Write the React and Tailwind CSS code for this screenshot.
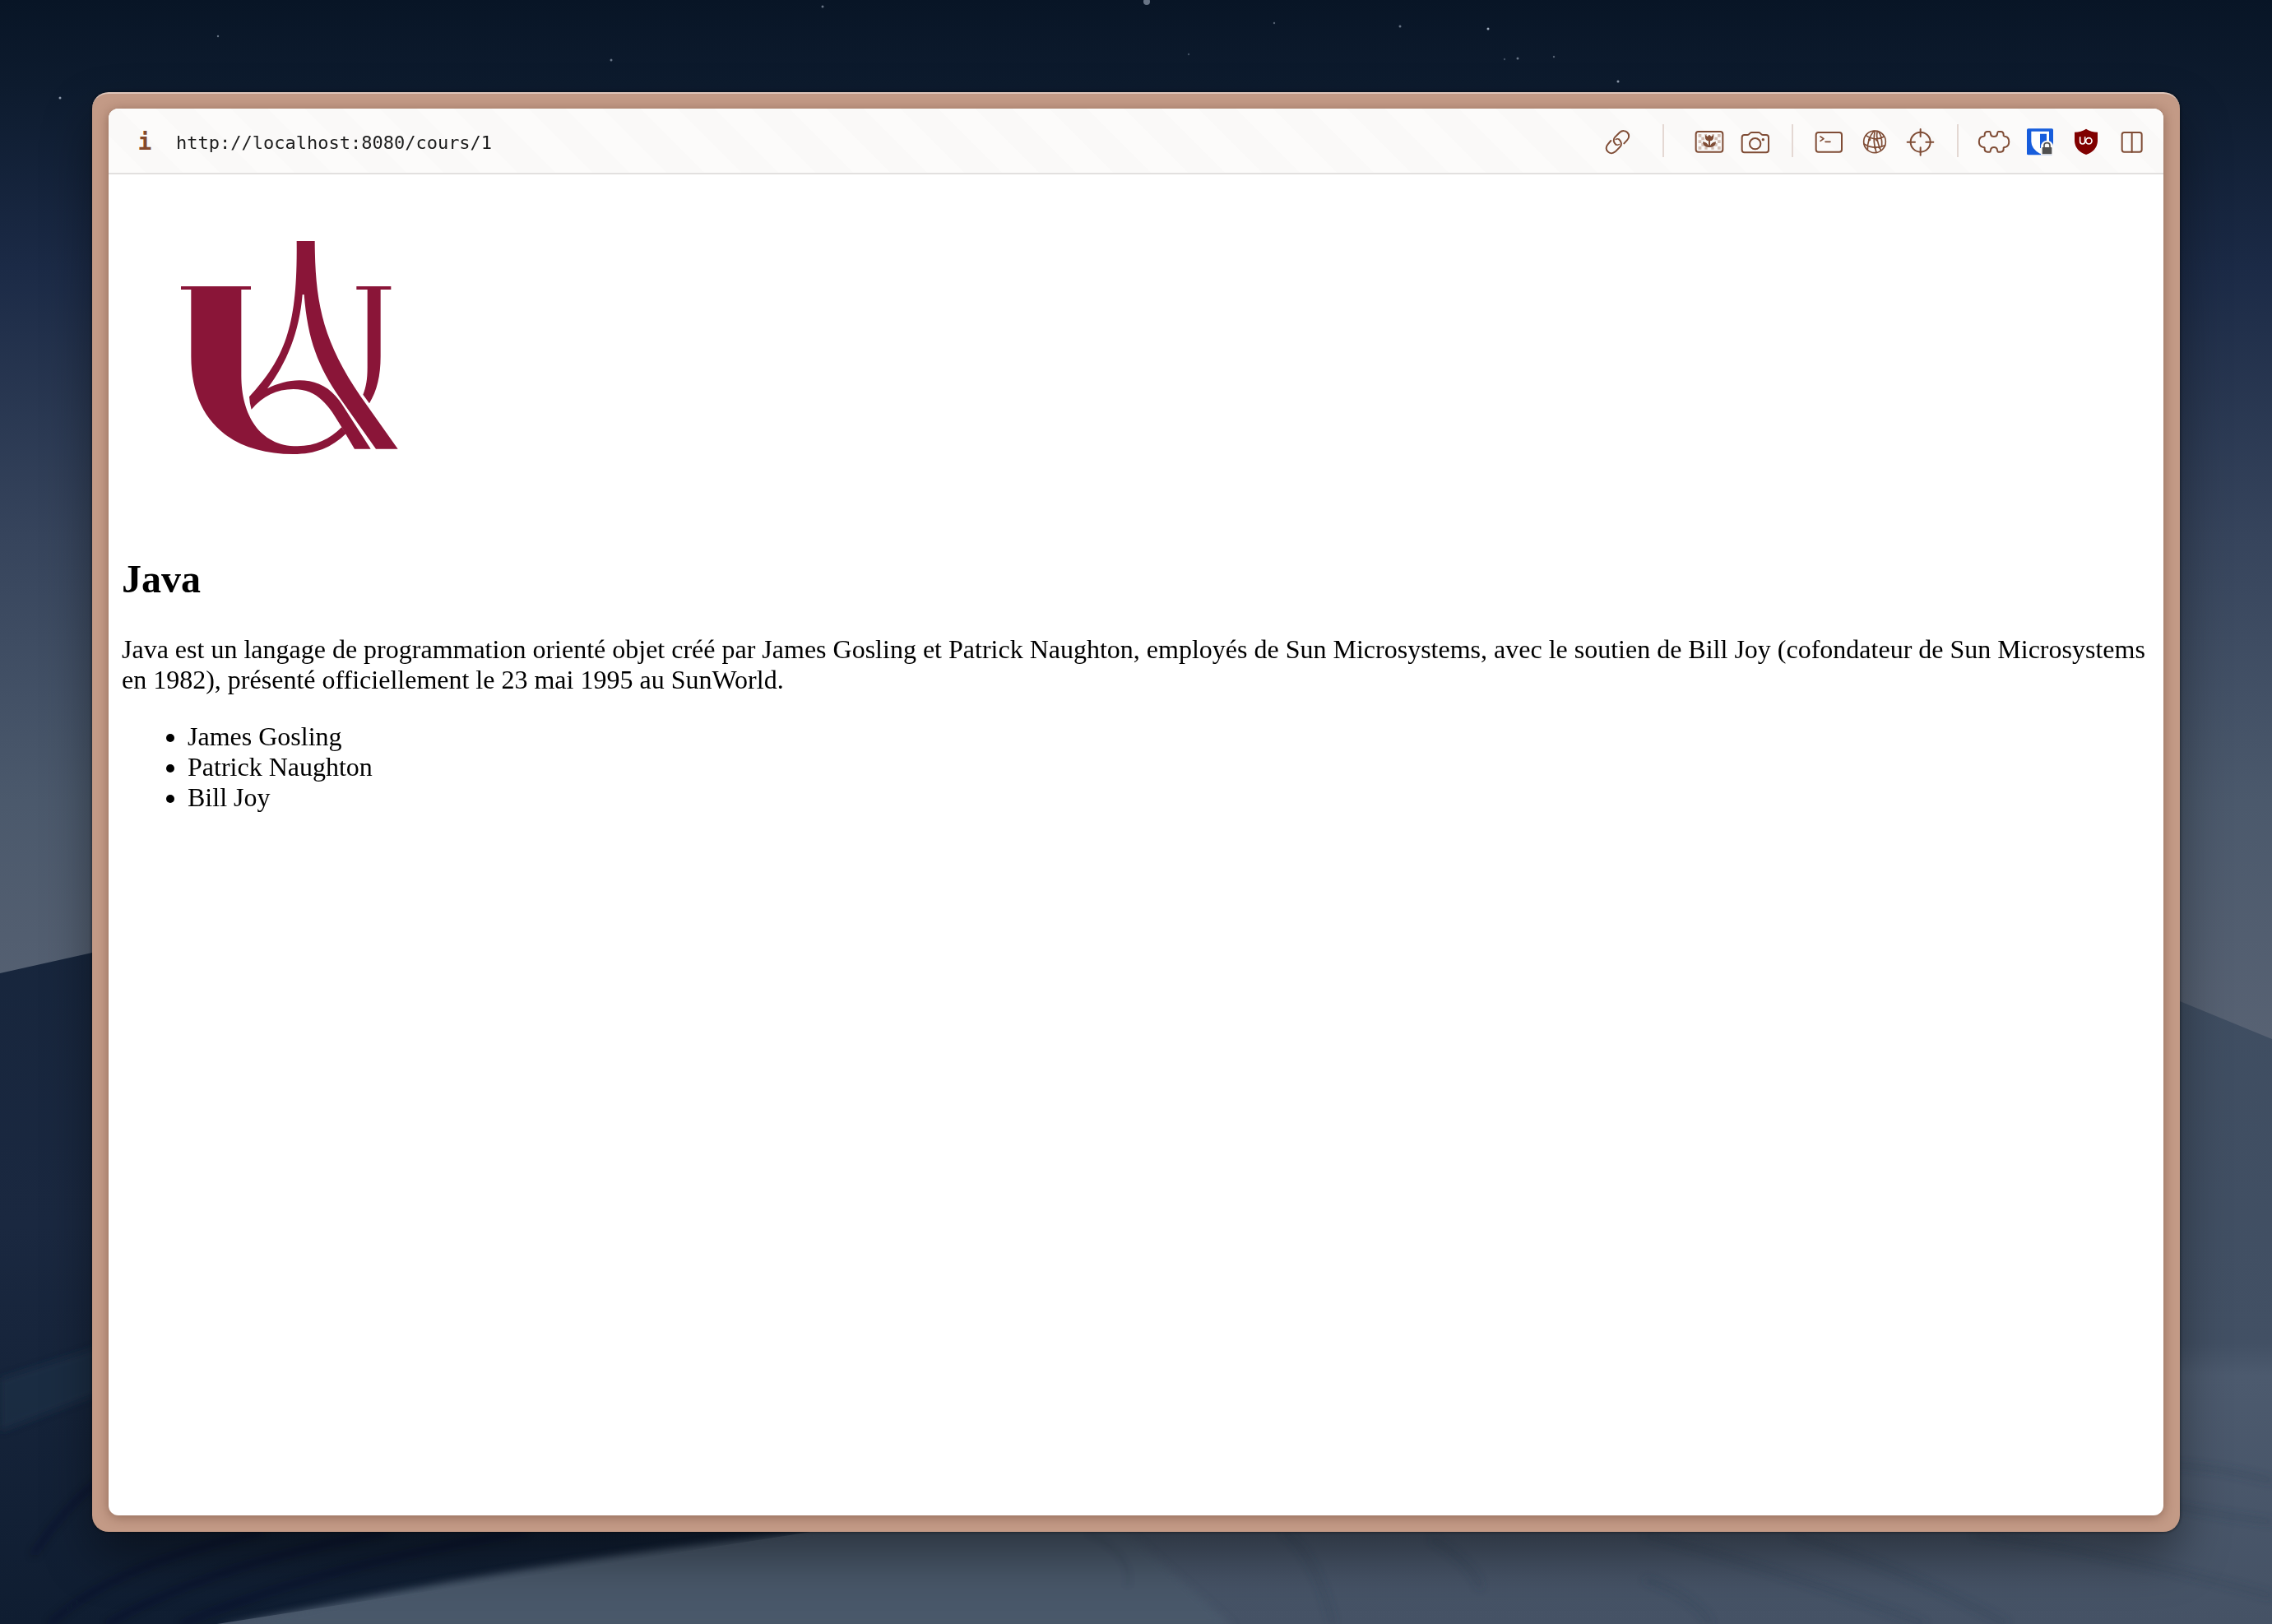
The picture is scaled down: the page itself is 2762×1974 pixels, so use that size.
import React from "react";

const STARS = [
  [1394, 2, 4, 0.5], [1000, 8, 1.5, 0.5], [743, 73, 1.5, 0.5], [1702, 32, 1.5, 0.5],
  [1809, 35, 1.5, 0.8], [1549, 28, 1.2, 0.4], [265, 44, 1.2, 0.5], [1845, 71, 1.5, 0.5],
  [1889, 69, 1.2, 0.4], [1829, 72, 1.2, 0.3], [1967, 99, 1.5, 0.7], [73, 119, 1.5, 0.7],
  [1445, 66, 1.2, 0.3],
];

function Wallpaper() {
  return (
    <svg
      className="absolute inset-0 h-full w-full"
      viewBox="0 0 2762 1974"
      preserveAspectRatio="none"
      aria-hidden="true"
    >
      <defs>
        <linearGradient id="sky" x1="0" y1="0" x2="0" y2="1">
          <stop offset="0" stopColor="#081526" />
          <stop offset="0.08" stopColor="#0d1b2e" />
          <stop offset="0.25" stopColor="#1b2a46" />
          <stop offset="0.5" stopColor="#36445c" />
          <stop offset="0.75" stopColor="#4b596c" />
          <stop offset="1" stopColor="#596374" />
        </linearGradient>
        <linearGradient id="duneLeft" x1="0" y1="0" x2="0" y2="1">
          <stop offset="0" stopColor="#15243a" />
          <stop offset="0.55" stopColor="#1a2840" />
          <stop offset="1" stopColor="#0f1d31" />
        </linearGradient>
        <linearGradient id="duneRight" x1="0" y1="0" x2="0" y2="1">
          <stop offset="0" stopColor="#3d4c60" />
          <stop offset="0.65" stopColor="#425064" />
          <stop offset="0.69" stopColor="#4c5a6e" />
          <stop offset="1" stopColor="#455265" />
        </linearGradient>
        <filter id="soft" x="-5%" y="-20%" width="110%" height="140%">
          <feGaussianBlur stdDeviation="5" />
        </filter>
      </defs>
      <rect width="2762" height="1300" fill="url(#sky)" />
      <path d="M1300 1000L2650 1217L2762 1263V1974H0V1700Z" fill="url(#duneRight)" />
      <path d="M0 1183L112 1158L1300 900V1800L986 1862L264 1974H0Z" fill="url(#duneLeft)" />
      <g filter="url(#soft)">
        <path d="M0 1676L130 1634V1690L0 1740Z" fill="#22314a" opacity="0.6" />
        <path d="M1300 1800L986 1862Q620 1900 264 1978H1500Z" fill="#4a586b" />
        <g fill="none" stroke="#0c182b" strokeWidth="5" opacity="0.5">
          <path d="M60 1974Q140 1900 320 1862" />
          <path d="M130 1974Q260 1900 470 1862" />
          <path d="M220 1974Q400 1900 640 1862" />
          <path d="M40 1890Q80 1830 120 1800" />
        </g>
        <g fill="none" stroke="#354357" strokeWidth="5" opacity="0.5">
          <path d="M1320 1862Q1380 1890 1370 1930" />
          <path d="M1560 1862Q1600 1890 1620 1974" />
          <path d="M1740 1870Q1790 1900 1800 1930" />
          <path d="M2000 1866Q2140 1900 2340 1974" />
          <path d="M2180 1866Q2300 1900 2440 1974" />
          <path d="M2400 1866Q2540 1880 2762 1940" />
          <path d="M2640 1780Q2700 1784 2762 1800" />
          <path d="M2640 1830Q2700 1842 2762 1850" />
          <path d="M2000 1920Q2060 1940 2080 1974" />
        </g>
      </g>
      {STARS.map(([x, y, r, o]) => (
        <circle key={x} cx={x} cy={y} r={r} fill="#c7d3e4" opacity={o} />
      ))}
    </svg>
  );
}

function ToolButton({ label, viewBox, children }) {
  return (
    <button
      type="button"
      aria-label={label}
      className="flex h-14 w-14 shrink-0 items-center justify-center text-[#7f4c35]"
    >
      <svg
        className="h-14 w-14"
        viewBox={viewBox}
        fill="none"
        stroke="currentColor"
        strokeWidth="6"
        strokeLinecap="round"
        strokeLinejoin="round"
        aria-hidden="true"
      >
        {children}
      </svg>
    </button>
  );
}

function LinkIcon() {
  return (
    <ToolButton label="Copy link" viewBox="54 38 168 168">
      <path d="M133 136C124 128 122 117 130 109L147 92C156 84 168 85 175 92C182 99 183 111 174 120L163 132" />
      <path d="M144 117C154 126 156 137 148 145L131 162C122 170 111 169 104 162C96 155 96 144 104 135L115 122" />
      <path d="M133 136Q140 140 146 135M144 117Q138 113 132 118" strokeWidth="4" />
    </ToolButton>
  );
}

function PictureIcon() {
  return (
    <ToolButton label="Image" viewBox="390 38 168 168">
      <g fill="#d3bfb5" stroke="none">
        <path d="M434 98h11v11h-11zM434 120h11v11h-11zM434 143h11v11h-11zM445 109h11v11h-11zM445 131h10v11h-10zM457 98h8v10h-8zM504 98h11v11h-11zM504 120h11v11h-11zM504 143h11v11h-11zM493 109h11v11h-11zM493 131h10v11h-10zM484 98h8v10h-8zM457 145h10v9h-10zM481 145h10v9h-10z" />
      </g>
      <path d="M459 101L467 107L474 100L481 107L489 101V113Q487 122 477 123V140Q482 128 498 126Q497 146 478 146H470Q451 146 450 126Q466 128 471 140V123Q461 122 459 113Z" fill="currentColor" stroke="none" />
      <rect x="425" y="89" width="98" height="74" rx="9" />
    </ToolButton>
  );
}

function CameraIcon() {
  return (
    <ToolButton label="Screenshot" viewBox="558 38 168 168">
      <path d="M602 101H613C621 101 620 92 628 92H654C662 92 661 101 669 101H681Q690 101 690 110V156Q690 165 681 165H602Q593 165 593 156V110Q593 101 602 101Z" />
      <circle cx="641" cy="133" r="20" />
      <circle cx="670" cy="118" r="5" fill="currentColor" stroke="none" />
    </ToolButton>
  );
}

function TerminalIcon() {
  return (
    <ToolButton label="Console" viewBox="105 38 168 168">
      <rect x="143" y="92" width="94" height="71" rx="9" />
      <path d="M159 107L171 115L159 123M177 126H195" strokeWidth="5" />
    </ToolButton>
  );
}

function GlobeIcon() {
  return (
    <ToolButton label="Network" viewBox="273 38 168 168">
      <circle cx="357" cy="126" r="40" strokeWidth="5" />
      <path d="M325 103Q360 126 391 107M318 134Q355 156 395 139M354 87Q330 116 331 156M358 87Q349 122 363 165M366 87Q361 118 379 156M370 88Q385 104 383 143" strokeWidth="5" />
      <g fill="currentColor" stroke="none">
        <circle cx="338" cy="118" r="5" />
        <circle cx="364" cy="120" r="4" />
        <circle cx="359" cy="147" r="5" />
        <circle cx="374" cy="147" r="4" />
      </g>
    </ToolButton>
  );
}

function TargetIcon() {
  return (
    <ToolButton label="Inspect" viewBox="441 38 168 168">
      <circle cx="524" cy="127" r="36" />
      <path d="M524 80V107M524 147V175M476 127H504M544 127H571" />
    </ToolButton>
  );
}

function ExtensionsIcon() {
  return (
    <ToolButton label="Extensions" viewBox="78 38 168 168">
      <path d="M138 89H146C150 89 149 94 150 98C152 110 172 110 174 98C175 94 174 89 178 89H187C195 89 197 94 197 101V104Q199 107 204 107C221 110 221 142 204 145Q199 145 197 148V153C197 160 194 163 187 163H178C174 163 175 159 174 155C172 143 152 143 150 155C149 159 150 163 146 163H138C130 163 128 159 128 153V148Q126 145 121 145C103 142 103 110 121 107Q126 107 128 104V101C128 94 130 89 138 89Z" />
    </ToolButton>
  );
}

function VaultIcon() {
  return (
    <ToolButton label="Password manager" viewBox="246 38 168 168">
      <rect x="282" y="78" width="96" height="96" rx="5" fill="#175ddc" stroke="none" />
      <path d="M298 88H363V125Q363 154 331 170Q298 152 298 125Z" fill="#fff" stroke="none" />
      <path d="M330 97H354V125Q350 140 330 150Z" fill="#175ddc" stroke="none" />
      <path d="M355 121A23 23 0 0 1 378 140V174H333V146A23 23 0 0 1 355 121Z" fill="#fbfaf9" stroke="none" />
      <rect x="338" y="146" width="35" height="25" rx="2" fill="#505050" stroke="none" />
      <path d="M345 147V139C345 127 366 127 366 139V147" stroke="#505050" strokeWidth="5" />
    </ToolButton>
  );
}

function ShieldIcon() {
  return (
    <ToolButton label="Content blocker" viewBox="414 38 168 168">
      <path d="M498 79Q516 91 540 91V124Q538 158 498 173Q458 158 456 124V91Q480 91 498 79Z" fill="#800000" stroke="none" />
      <path d="M476 108V125Q476 134 485 134Q494 134 494 125V108" stroke="#fff" strokeWidth="5" strokeLinecap="butt" />
      <circle cx="508" cy="123" r="11" stroke="#fff" strokeWidth="5" />
    </ToolButton>
  );
}

function SplitIcon() {
  return (
    <ToolButton label="Split view" viewBox="582 38 168 168">
      <rect x="629" y="92" width="72" height="71" rx="8" />
      <path d="M665 92V163" />
    </ToolButton>
  );
}

function Toolbar() {
  return (
    <header className="flex h-20 shrink-0 items-center border-b-2 border-[#e2e0df] bg-[#faf9f8] bg-[repeating-linear-gradient(45deg,#fcfbfa_0px,#fcfbfa_32px,#faf9f8_32px,#faf9f8_64px)] pr-2.5">
      <button
        type="button"
        aria-label="Page information"
        className="ml-4 flex h-14 w-14 shrink-0 items-center justify-center pt-1 font-['DejaVu_Sans_Mono',monospace] text-[28px] font-bold text-[#84492c]"
      >
        i
      </button>
      <input
        type="text"
        aria-label="Address"
        defaultValue="http://localhost:8080/cours/1"
        spellCheck={false}
        className="ml-2.5 h-14 min-w-0 flex-1 bg-transparent pt-1 font-['DejaVu_Sans_Mono',monospace] text-[22px] text-[#1c1c1c] outline-none"
      />
      <LinkIcon />
      <span className="mx-[27px] h-10 w-0.5 shrink-0 bg-[#e4d8d3]" />
      <PictureIcon />
      <CameraIcon />
      <span className="mr-[15px] ml-4 h-10 w-0.5 shrink-0 bg-[#e4d8d3]" />
      <TerminalIcon />
      <GlobeIcon />
      <TargetIcon />
      <span className="mr-[15px] ml-4 h-10 w-0.5 shrink-0 bg-[#e4d8d3]" />
      <ExtensionsIcon />
      <VaultIcon />
      <ShieldIcon />
      <SplitIcon />
    </header>
  );
}

function Logo() {
  return (
    <svg
      className="h-[400px] w-[400px]"
      viewBox="-156 -126 1200 1200"
      fill="#8a1538"
      role="img"
      aria-label="Logo"
    >
      <path d="M60 234H315V246H280V560C280 700 345 817 485 817C550 817 605 790 646 748L662 771C610 822 550 846 470 846C240 846 97 720 97 490V246H60Z" />
      <path d="M482 69H548C549 290 575 430 715 635L851 827H771L640 642C560 525 522 430 509 264H503C492 400 445 515 375 607C455 565 560 560 625 635Q638 650 646 662L752 827H693L646 748C600 670 560 609 470 609C410 609 358 635 317 683Q310 660 309 637C445 490 485 370 482 69Z" />
      <path d="M700 234H826V246H788V490C788 560 775 615 747 661L724 629C735 600 740 575 740 530V246H700Z" />
    </svg>
  );
}

export default function App() {
  return (
    <div className="relative flex min-h-screen flex-col bg-[#0d1b2e] p-28">
      <Wallpaper />
      <div className="relative flex flex-1 flex-col rounded-[20px] border-t-2 border-[#dfc6ba] bg-[#c39a86] px-5 pt-[18px] pb-5 shadow-[0_30px_60px_rgba(0,0,0,0.4),0_0_4px_rgba(0,0,0,0.6)]">
        <div className="flex flex-1 flex-col overflow-hidden rounded-xl bg-white shadow-[0_2px_14px_rgba(70,35,20,0.4)]">
          <Toolbar />
          <main className="p-4 font-['Liberation_Serif',serif] text-[32px] leading-[37px] text-black">
            <Logo />
            <h2 className="mt-12 text-5xl leading-[55px] font-bold">Java</h2>
            <p className="mt-10">
              Java est un langage de programmation orienté objet créé par James Gosling et Patrick
              Naughton, employés de Sun Microsystems, avec le soutien de Bill Joy (cofondateur de
              Sun Microsystems en 1982), présenté officiellement le 23 mai 1995 au SunWorld.
            </p>
            <ul className="mt-8 list-disc pl-20">
              <li>James Gosling</li>
              <li>Patrick Naughton</li>
              <li>Bill Joy</li>
            </ul>
          </main>
        </div>
      </div>
    </div>
  );
}
